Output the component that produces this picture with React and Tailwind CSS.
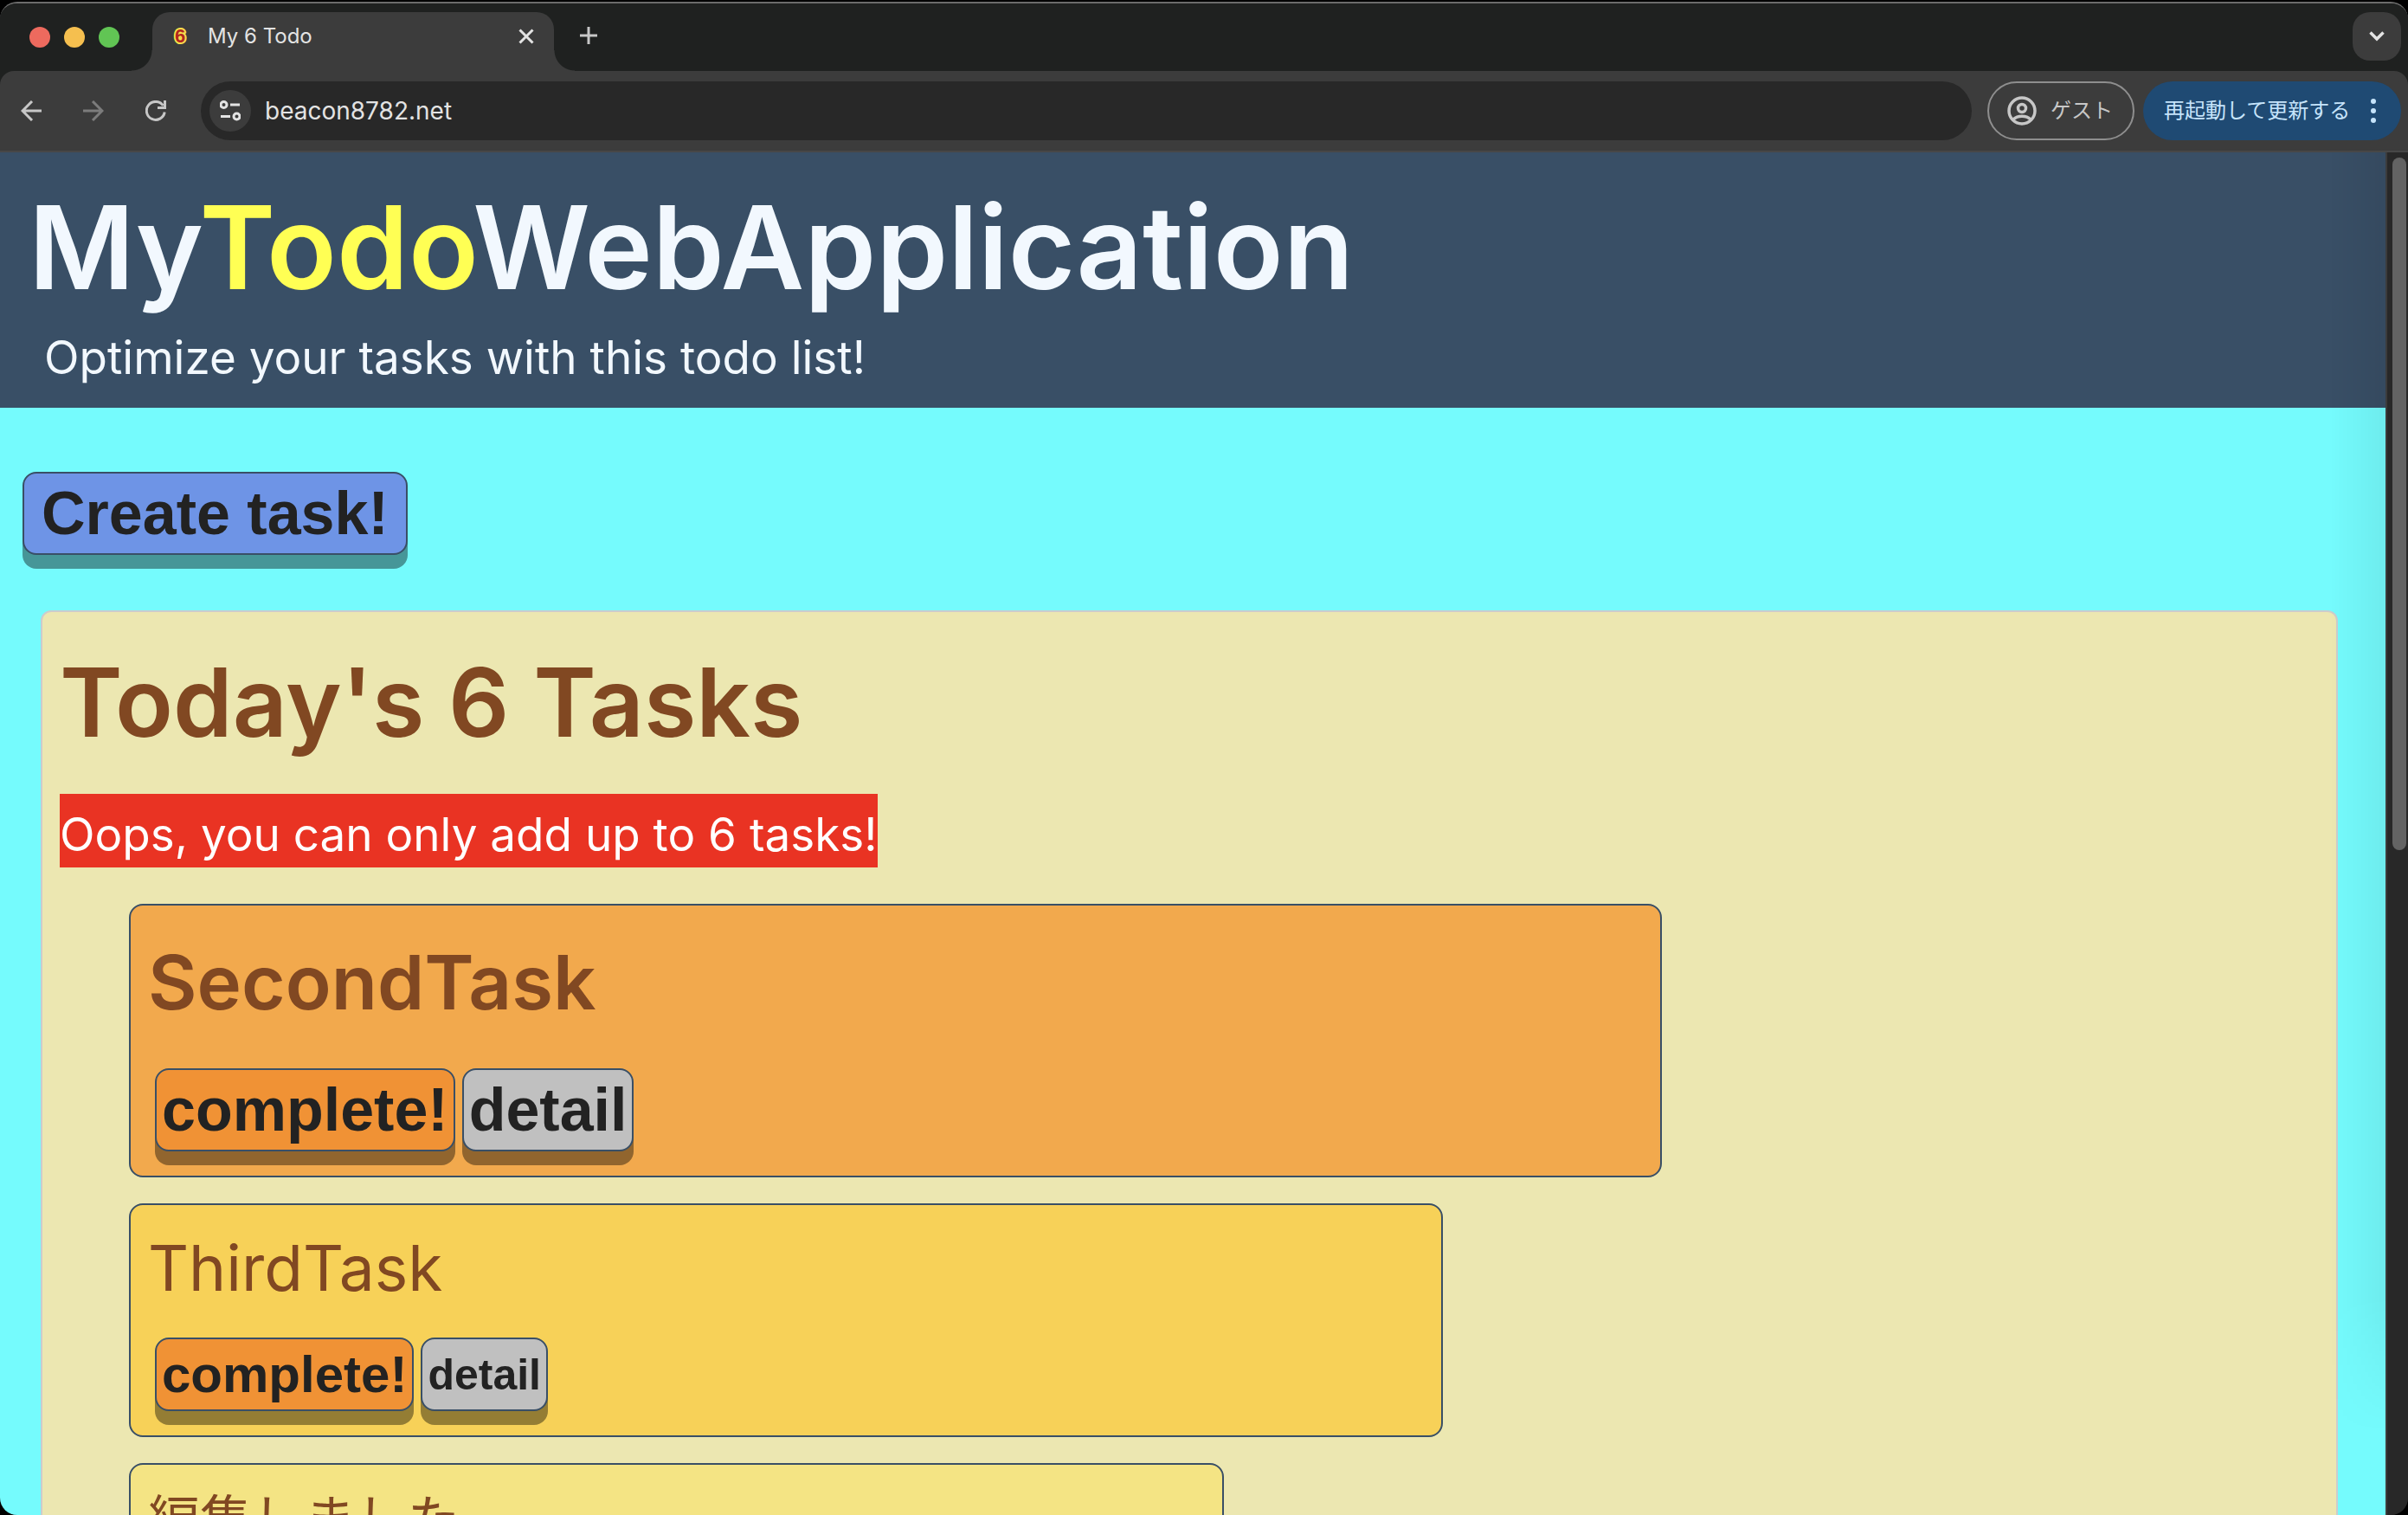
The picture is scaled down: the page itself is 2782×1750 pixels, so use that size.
import React from "react";

function BackIcon() {
  return (
    <svg width="24" height="24" viewBox="0 0 24 24" fill="none" stroke="currentColor" strokeWidth="3">
      <path d="M24 12H2.5M13 1 2 12l11 11" />
    </svg>
  );
}

function ForwardIcon() {
  return (
    <svg width="24" height="24" viewBox="0 0 24 24" fill="none" stroke="currentColor" strokeWidth="3">
      <path d="M0 12h21.5M11 1l11 11-11 11" />
    </svg>
  );
}

function ReloadIcon() {
  return (
    <svg width="24" height="24" viewBox="0 0 24 24" fill="none" stroke="currentColor" strokeWidth="3">
      <path d="M22.2 13.5A10.5 10.5 0 1 1 20.5 6" />
      <path d="M22.5 0v8.5H14" />
    </svg>
  );
}

function SiteIcon() {
  return (
    <svg width="24" height="24" viewBox="0 0 24 24" fill="none" stroke="currentColor" strokeWidth="3">
      <circle cx="4.5" cy="5" r="3.5" />
      <path d="M12 5h11M1 18.5h11" />
      <circle cx="19.5" cy="18.5" r="3.5" />
    </svg>
  );
}

function PersonIcon() {
  return (
    <svg width="34" height="34" viewBox="0 0 34 34" fill="none" stroke="currentColor" strokeWidth="3.5">
      <circle cx="17" cy="17" r="15" />
      <circle cx="17" cy="14" r="4.5" />
      <path d="M6.5 27.2c6-5.200 15-5.200 21 0" />
    </svg>
  );
}

function Favicon() {
  return (
    <svg width="16" height="22" viewBox="0 0 16 22" aria-hidden="true">
      <text
        x="8"
        y="18"
        textAnchor="middle"
        fontFamily="Liberation Sans, sans-serif"
        fontWeight="700"
        fontSize="22"
        fill="#b3261e"
        stroke="#f7e04b"
        strokeWidth="4"
        strokeLinejoin="round"
        paintOrder="stroke"
      >
        6
      </text>
    </svg>
  );
}

function TabStrip() {
  return (
    <div className="flex h-[78px] items-end bg-[#1f2120]">
      <div className="mb-[27px] ml-[34px] flex gap-4">
        <button aria-label="Close window" className="size-6 rounded-full bg-[#ed6a5e]" />
        <button aria-label="Minimize window" className="size-6 rounded-full bg-[#f5bf4f]" />
        <button aria-label="Zoom window" className="size-6 rounded-full bg-[#61c554]" />
      </div>
      <div className="ml-[14px] size-6 bg-[radial-gradient(circle_at_0_0,transparent_23px,#3c3c3c_24px)]" />
      <div className="flex h-[68px] w-[464px] items-center rounded-t-[20px] bg-[#3c3c3c] pr-[23px] pb-3 pl-6">
        <Favicon />
        <span className="ml-6 flex-1 text-[24px] leading-[32px] text-[#e3e3e3]">My 6 Todo</span>
        <button aria-label="Close tab" className="text-[#e3e3e3]">
          <svg width="18" height="18" viewBox="0 0 18 18" stroke="currentColor" strokeWidth="3">
            <path d="M1.5 1.5l15 15M16.5 1.5l-15 15" />
          </svg>
        </button>
      </div>
      <div className="size-6 bg-[radial-gradient(circle_at_100%_0,transparent_23px,#3c3c3c_24px)]" />
      <button aria-label="New tab" className="mb-[30px] ml-[5px] text-[#c7c7c7]">
        <svg width="22" height="22" viewBox="0 0 22 22" stroke="currentColor" strokeWidth="3">
          <path d="M11 1v20M1 11h20" />
        </svg>
      </button>
      <button
        aria-label="Search tabs"
        className="mr-2 mb-3 ml-auto flex size-14 items-center justify-center rounded-[20px] bg-[#3c3c3c] text-[#e3e3e3]"
      >
        <svg width="18" height="12" viewBox="0 0 18 12" fill="none" stroke="currentColor" strokeWidth="3.5">
          <path d="M1.500 1.500 9 9l7.500-7.500" />
        </svg>
      </button>
    </div>
  );
}

function Toolbar() {
  return (
    <div className="bg-[#1f2120]">
      <div className="flex h-[94px] items-center rounded-t-[16px] border-b-2 border-[#474747] bg-[#3c3c3c] pr-2 pl-6">
        <button aria-label="Back" className="text-[#c7c7c7]">
          <BackIcon />
        </button>
        <button aria-label="Forward" className="ml-12 text-[#7c7c7c]">
          <ForwardIcon />
        </button>
        <button aria-label="Reload" className="ml-12 text-[#c7c7c7]">
          <ReloadIcon />
        </button>
        <div className="ml-10 flex h-[68px] min-w-0 flex-1 items-center rounded-full bg-[#282828] pl-[10px]">
          <button
            aria-label="View site information"
            className="flex size-12 items-center justify-center rounded-full bg-[#3c3c3c] text-[#e3e3e3]"
          >
            <SiteIcon />
          </button>
          <input
            aria-label="Address"
            defaultValue="beacon8782.net"
            className="ml-4 min-w-0 flex-1 bg-transparent text-[28px] leading-[40px] text-[#e3e3e3] outline-none"
          />
        </div>
        <button className="ml-[18px] flex h-[68px] w-[170px] items-center rounded-full border-2 border-[#8e8e8e] pl-[21px] text-[24px] leading-[32px] text-[#c7c7c7]">
          <PersonIcon />
          <span className="ml-4">ゲスト</span>
        </button>
        <button className="ml-[10px] flex h-[68px] w-[298px] items-center rounded-full bg-[#1f4a73] pl-6 text-[24px] leading-[32px] text-[#c6e4fb]">
          再起動して更新する
          <svg className="ml-6" width="6" height="30" viewBox="0 0 6 30" fill="currentColor">
            <circle cx="3" cy="4" r="3" />
            <circle cx="3" cy="15" r="3" />
            <circle cx="3" cy="26" r="3" />
          </svg>
        </button>
      </div>
    </div>
  );
}

const raised =
  "rounded-[16px] border-2 border-[#394f66] font-['Liberation_Sans',Arial,sans-serif] font-bold text-[#222222] shadow-[0_16px_0_rgba(0,0,0,0.4)]";

const tasks = [
  {
    title: "SecondTask",
    card: "w-[70%] bg-[#f2a94d] pt-[37px]",
    heading: "text-[87px] leading-[104px] font-semibold mb-[47px]",
    row: "h-24",
    complete: "text-[70px]",
    detail: "text-[70px]",
  },
  {
    title: "ThirdTask",
    card: "w-[60%] bg-[#f7d158] pt-[29px]",
    heading: "text-[73px] leading-[88px] mb-9",
    row: "h-[85px]",
    complete: "text-[60px]",
    detail: "text-[50px]",
  },
  {
    title: "編集しました",
    card: "w-1/2 bg-[#f4e484] pt-[27px]",
    heading: "text-[60px] leading-[72px] mb-8",
    row: "h-[73px]",
    complete: "text-[50px]",
    detail: "text-[42px]",
  },
];

function TaskCard({ task }) {
  return (
    <li className={`rounded-[16px] border-2 border-[#394f66] px-5 pb-7 ${task.card}`}>
      <h3 className={task.heading}>{task.title}</h3>
      <div className={`ml-2 flex gap-2 ${task.row}`}>
        <button className={`${raised} bg-[#f09235] px-[6px] leading-none ${task.complete}`}>complete!</button>
        <button className={`${raised} bg-[#c0c0c0] px-[6px] leading-none ${task.detail}`}>detail</button>
      </div>
    </li>
  );
}

function TodoPage() {
  return (
    <div className="relative min-w-0 flex-1 overflow-hidden bg-[#75fbfd]">
      <header className="bg-[#394f66] pt-[30px] pb-[26px] text-[#f2f8fe]">
        <h1 className="pl-[33px] text-[133px] leading-[160px] font-semibold">
          My<span className="text-[#ffff54]">Todo</span>WebApplication
        </h1>
        <p className="mt-[15px] pl-[51px] text-[53px] leading-[64px]">Optimize your tasks with this todo list!</p>
      </header>
      <main className="pt-[74px]">
        <button className={`${raised} ml-[26px] h-24 bg-[#6e94e6] px-5 text-[70px] leading-none`}>Create task!</button>
        <section className="mt-16 mr-[55px] ml-[47px] rounded-[12px] border-2 border-[#cccccc] bg-[#ece7b1] px-5 pt-[38px] pb-10 text-[#814822]">
          <h2 className="text-[110px] leading-[132px] font-semibold">Today&apos;s 6 Tasks</h2>
          <p className="mt-10 w-fit bg-[#e93323] pt-[9px] text-[53px] leading-[76px] text-white">
            Oops, you can only add up to 6 tasks!
          </p>
          <ul className="mt-[42px] flex flex-col gap-[30px] pl-20">
            {tasks.map((task) => (
              <TaskCard key={task.title} task={task} />
            ))}
          </ul>
        </section>
      </main>
      <div className="pointer-events-none absolute inset-y-0 right-0 w-16 bg-linear-to-r from-transparent to-black/6 mask-b-from-84% mask-b-to-94%" />
    </div>
  );
}

export default function App() {
  return (
    <div className="h-screen overflow-hidden bg-black pt-[2px] font-['Inter','Noto_Sans_CJK_JP',sans-serif]">
      <div className="flex h-full flex-col overflow-hidden rounded-[20px] border-t-2 border-[#6b6b6b] bg-[#1f2120]">
        <TabStrip />
        <Toolbar />
        <div className="flex min-h-0 flex-1">
          <TodoPage />
          <div className="w-[26px] border-l-2 border-[#3c3c3c] bg-[#282828] pt-[6px] pl-[6px]">
            <div className="h-[51%] w-4 rounded-full bg-[#636363]" />
          </div>
        </div>
      </div>
    </div>
  );
}
